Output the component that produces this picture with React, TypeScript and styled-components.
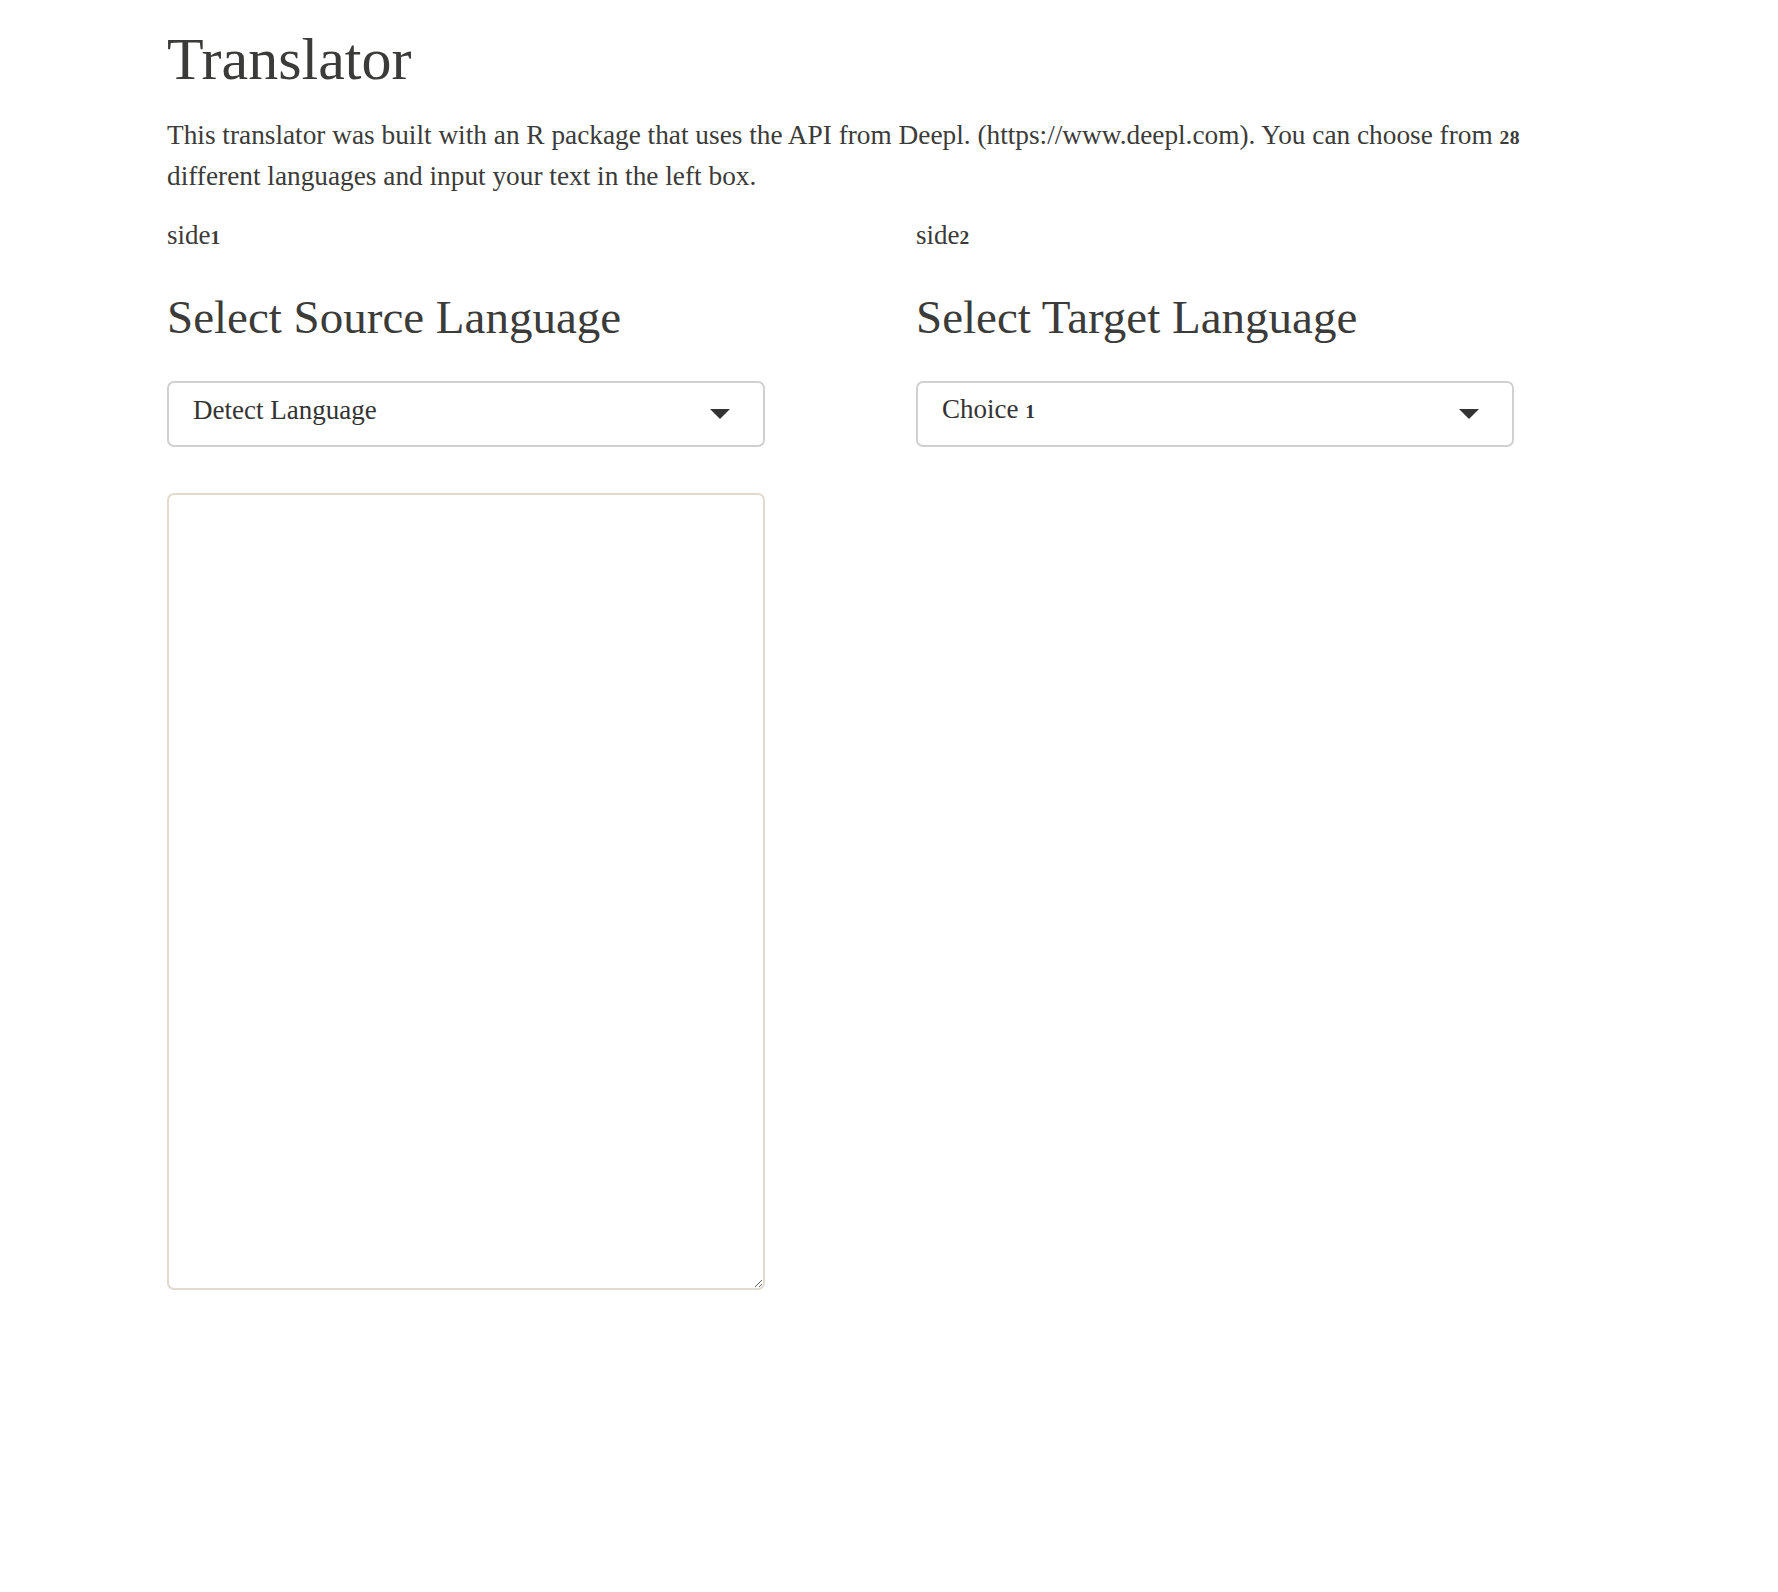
import React from "react";
import styled, { createGlobalStyle } from "styled-components";

const GlobalStyle = createGlobalStyle`
  html, body {
    margin: 0;
    padding: 0;
    background: #ffffff;
  }
  body {
    font-family: "Liberation Serif", "Times New Roman", serif;
    color: #3b3b39;
  }
  * { box-sizing: border-box; }
`;

const Page = styled.main`
  padding: 27px 0 120px 167px;
`;

const Title = styled.h1`
  margin: 0;
  font-size: 60px;
  font-weight: 400;
  line-height: 65px;
  color: #3b3b39;
`;

const Intro = styled.p`
  margin: 24px 0 0;
  max-width: 1420px;
  font-size: 27.3px;
  line-height: 39px;
`;

const Num = styled.span<{ $bold?: boolean }>`
  font-size: 0.72em;
  font-weight: ${(p) => (p.$bold ? 700 : 600)};
  letter-spacing: 0.02em;
`;

const Columns = styled.div`
  display: grid;
  grid-template-columns: repeat(2, 749px);
  margin-top: 20px;
`;

const Column = styled.section`
  display: flex;
  flex-direction: column;
  align-items: flex-start;
`;

const SideLabel = styled.div`
  font-size: 27px;
  line-height: 39px;
`;

const Heading = styled.h2`
  margin: 32px 0 0;
  font-size: 47px;
  font-weight: 400;
  line-height: 56.4px;
  color: #3b3b39;
`;

const SelectBox = styled.button`
  margin-top: 36px;
  width: 598px;
  height: 66px;
  display: flex;
  align-items: center;
  justify-content: space-between;
  padding: 0 33px 7px 24px;
  background: #ffffff;
  border: 2px solid #d0d0d0;
  border-radius: 7px;
  font-family: "Liberation Serif", "Times New Roman", serif;
  font-size: 27px;
  line-height: 27px;
  color: #333333;
  cursor: pointer;
  text-align: left;
`;

const Arrow = styled.svg`
  width: 20px;
  height: 10px;
  flex: none;
  margin-top: 7px;
`;

const TextBox = styled.textarea`
  margin-top: 46px;
  width: 598px;
  height: 797px;
  border: 2px solid #e2dace;
  border-radius: 7px;
  padding: 12px 16px;
  font-family: "Liberation Serif", "Times New Roman", serif;
  font-size: 27px;
  color: #333333;
  background: #ffffff;
  resize: both;
  outline: none;
`;

function Select({ children }: { children: React.ReactNode }) {
  return (
    <SelectBox type="button" aria-haspopup="listbox">
      <span>{children}</span>
      <Arrow viewBox="0 0 20 10" aria-hidden="true">
        <path d="M0 0 L20 0 L10 10 Z" fill="#333333" />
      </Arrow>
    </SelectBox>
  );
}

export default function App() {
  return (
    <>
      <GlobalStyle />
      <Page>
        <Title>Translator</Title>
        <Intro>
          This translator was built with an R package that uses the API from Deepl. (https://www.deepl.com). You can
          choose from <Num $bold>28</Num> different languages and input your text in the left box.
        </Intro>
        <Columns>
          <Column>
            <SideLabel>
              side<Num>1</Num>
            </SideLabel>
            <Heading>Select Source Language</Heading>
            <Select>Detect Language</Select>
            <TextBox aria-label="Source text" />
          </Column>
          <Column>
            <SideLabel>
              side<Num>2</Num>
            </SideLabel>
            <Heading>Select Target Language</Heading>
            <Select>
              Choice <Num>1</Num>
            </Select>
          </Column>
        </Columns>
      </Page>
    </>
  );
}
